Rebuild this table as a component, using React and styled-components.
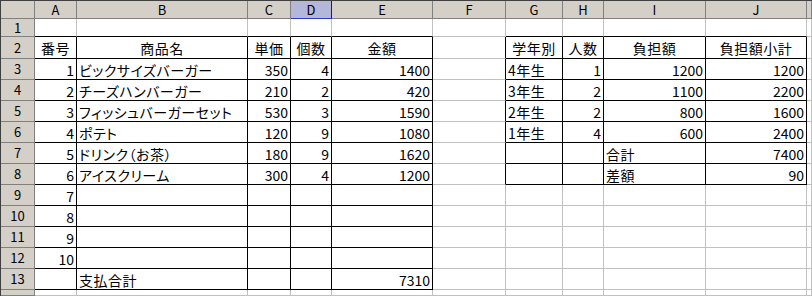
import React from "react";
import styled, { createGlobalStyle } from "styled-components";

const GlobalStyle = createGlobalStyle`
  html, body {
    margin: 0;
    padding: 0;
    background: #ffffff;
  }
  body {
    font-family: "Noto Sans CJK JP", "Liberation Sans", sans-serif;
  }
`;

// column letters, K is the partly visible one at the right edge
const COLS = ["A", "B", "C", "D", "E", "F", "G", "H", "I", "J", "K"];
const ROWS = 14;
const SELECTED_COL = "D";

const CELLS = {
  2: { A: "番号", B: "商品名", C: "単価", D: "個数", E: "金額", G: "学年別", H: "人数", I: "負担額", J: "負担額小計" },
  3: { A: 1, B: "ビックサイズバーガー", C: 350, D: 4, E: 1400, G: "4年生", H: 1, I: 1200, J: 1200 },
  4: { A: 2, B: "チーズハンバーガー", C: 210, D: 2, E: 420, G: "3年生", H: 2, I: 1100, J: 2200 },
  5: { A: 3, B: "フィッシュバーガーセット", C: 530, D: 3, E: 1590, G: "2年生", H: 2, I: 800, J: 1600 },
  6: { A: 4, B: "ポテト", C: 120, D: 9, E: 1080, G: "1年生", H: 4, I: 600, J: 2400 },
  7: { A: 5, B: "ドリンク（お茶）", C: 180, D: 9, E: 1620, I: "合計", J: 7400 },
  8: { A: 6, B: "アイスクリーム", C: 300, D: 4, E: 1200, I: "差額", J: 90 },
  9: { A: 7 },
  10: { A: 8 },
  11: { A: 9 },
  12: { A: 10 },
  13: { B: "支払合計", E: 7310 },
};

const HEADER_ROW = 2;

// ranges drawn with thin black borders (column index, row number)
const TABLES = [
  { c0: 0, c1: 4, r0: 2, r1: 13 },
  { c0: 6, c1: 9, r0: 2, r1: 8 },
];

const inTable = (c, r) =>
  TABLES.some((t) => c >= t.c0 && c <= t.c1 && r >= t.r0 && r <= t.r1);

const GRID = "#c0c0c0";
const INK = "#000000";

function Sheet() {
  const cells = [];

  cells.push(<Corner key="corner" />);
  COLS.forEach((col) => {
    cells.push(
      <ColHeader key={"h" + col} $selected={col === SELECTED_COL}>
        {col === "K" ? "" : col}
      </ColHeader>
    );
  });

  for (let r = 1; r <= ROWS; r++) {
    cells.push(<RowHeader key={"r" + r}>{r < ROWS ? r : ""}</RowHeader>);
    COLS.forEach((col, c) => {
      const value = CELLS[r] && CELLS[r][col];
      const isNum = typeof value === "number";
      const align = r === HEADER_ROW ? "center" : isNum ? "flex-end" : "flex-start";
      cells.push(
        <Cell
          key={col + r}
          $align={align}
          $text={!isNum}
          $br={inTable(c, r) || inTable(c + 1, r) ? INK : GRID}
          $bb={inTable(c, r) || inTable(c, r + 1) ? INK : GRID}
        >
          {value}
        </Cell>
      );
    });
  }

  return <Grid>{cells}</Grid>;
}

export default function App() {
  return (
    <>
      <GlobalStyle />
      <Frame>
        <Sheet />
      </Frame>
    </>
  );
}

const Frame = styled.div`
  width: 100vw;
  height: 100vh;
  overflow: hidden;
  box-sizing: border-box;
  border-top: 1px solid #404040;
  border-left: 1px solid #404040;
  background: #ffffff;
`;

const Grid = styled.div`
  display: grid;
  grid-template-columns: 34px 42px 171px 43px 41px 101px 73px 57px 41px 102px 101px 1fr;
  grid-template-rows: 18px 18px 22px repeat(11, 21px) 1fr;
  height: 100%;
`;

const Corner = styled.div`
  box-sizing: border-box;
  background: #d4d0c8;
  border-right: 1px solid #808080;
  border-bottom: 1px solid #808080;
`;

const ColHeader = styled.div`
  box-sizing: border-box;
  display: flex;
  align-items: center;
  justify-content: center;
  background: ${(p) => (p.$selected ? "#b4b6da" : "#d4d0c8")};
  border-right: 1px solid ${(p) => (p.$selected ? "#0a246a" : "#808080")};
  border-bottom: 1px solid ${(p) => (p.$selected ? "#2a3ccc" : "#808080")};
  font-size: 13px;
  line-height: 16px;
  color: #000000;
`;

const RowHeader = styled.div`
  box-sizing: border-box;
  display: flex;
  align-items: center;
  justify-content: center;
  background: #d4d0c8;
  border-right: 1px solid #808080;
  border-bottom: 1px solid #808080;
  font-size: 13px;
  line-height: 16px;
  color: #000000;
  overflow: hidden;
`;

const Cell = styled.div`
  box-sizing: border-box;
  display: flex;
  align-items: center;
  justify-content: ${(p) => p.$align};
  padding: 1px 2px 0;
  border-right: 1px solid ${(p) => p.$br};
  border-bottom: 1px solid ${(p) => p.$bb};
  font-size: 14px;
  line-height: 18px;
  letter-spacing: ${(p) => (p.$text ? "0.5px" : "0")};
  color: #000000;
  white-space: nowrap;
  overflow: hidden;
  font-feature-settings: "palt";
`;
